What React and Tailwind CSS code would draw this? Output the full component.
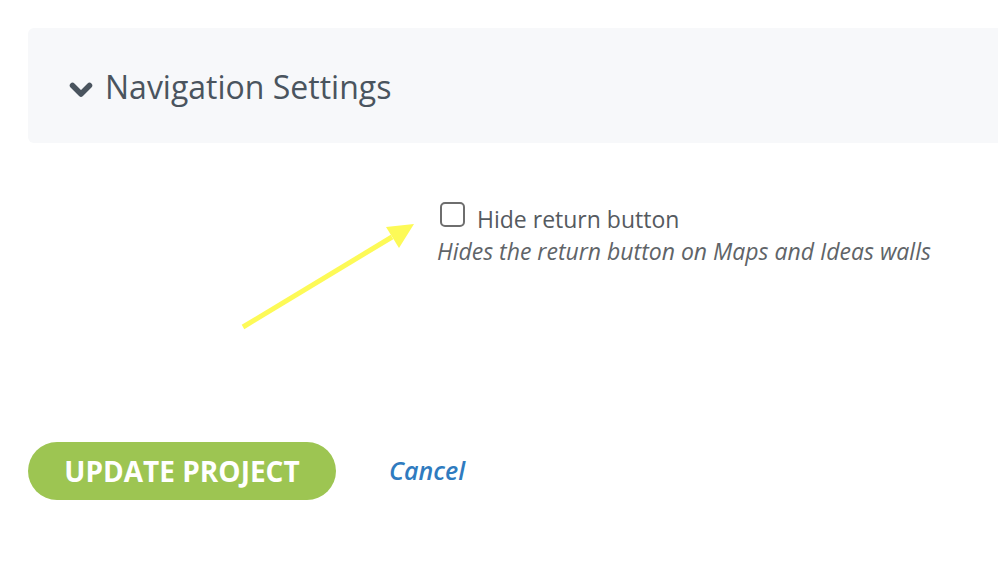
export default function App() {
  return (
    <div className="w-[998px] h-[588px] overflow-hidden bg-white relative" style={{ fontFamily: '"Open Sans", sans-serif' }}>
      <div className="pt-[28px] pl-[28px]">
        <div className="h-[115px] w-[1000px] bg-[#f7f8fa] rounded-l-[6px] flex items-center pl-[41px] pt-[2px]">
          <svg width="24" height="16" viewBox="0 0 24 16" className="mr-[12px] mt-[7px]">
            <path d="M3.5 3.5 L12 12 L20.5 3.5" fill="none" stroke="#4a545e" strokeWidth="5.5" strokeLinecap="round" strokeLinejoin="round" />
          </svg>
          <span className="text-[32px] text-[#4a545e] leading-none">Navigation Settings</span>
        </div>
      </div>

      <div className="pl-[437px] pt-[59px]">
        <label className="flex items-start gap-[12px] pl-[3px] h-[28px]">
          <span className="w-[25px] h-[25px] border-2 border-[#6e6e6e] rounded-[5px] bg-white shrink-0" />
          <span className="mt-[6px] text-[23px] text-[#555a5f] leading-none">Hide return button</span>
        </label>
        <p className="mt-[10px] text-[23px] italic text-[#606468] leading-none">Hides the return button on Maps and Ideas walls</p>
      </div>

      <svg className="absolute left-0 top-0" width="998" height="588">
        <line x1="243" y1="327" x2="392" y2="237" stroke="#fdfa57" strokeWidth="5" />
        <polygon points="414,224 386,227 399,248" fill="#fdfa57" />
      </svg>

      <div className="pl-[28px] pt-[179px] flex items-center">
        <button className="h-[58px] w-[308px] rounded-full bg-[#9dc552] text-white font-bold text-[28px]">UPDATE PROJECT</button>
        <a className="ml-[53px] text-[25px] italic font-semibold text-[#2f7bbf]">Cancel</a>
      </div>
    </div>
  );
}
